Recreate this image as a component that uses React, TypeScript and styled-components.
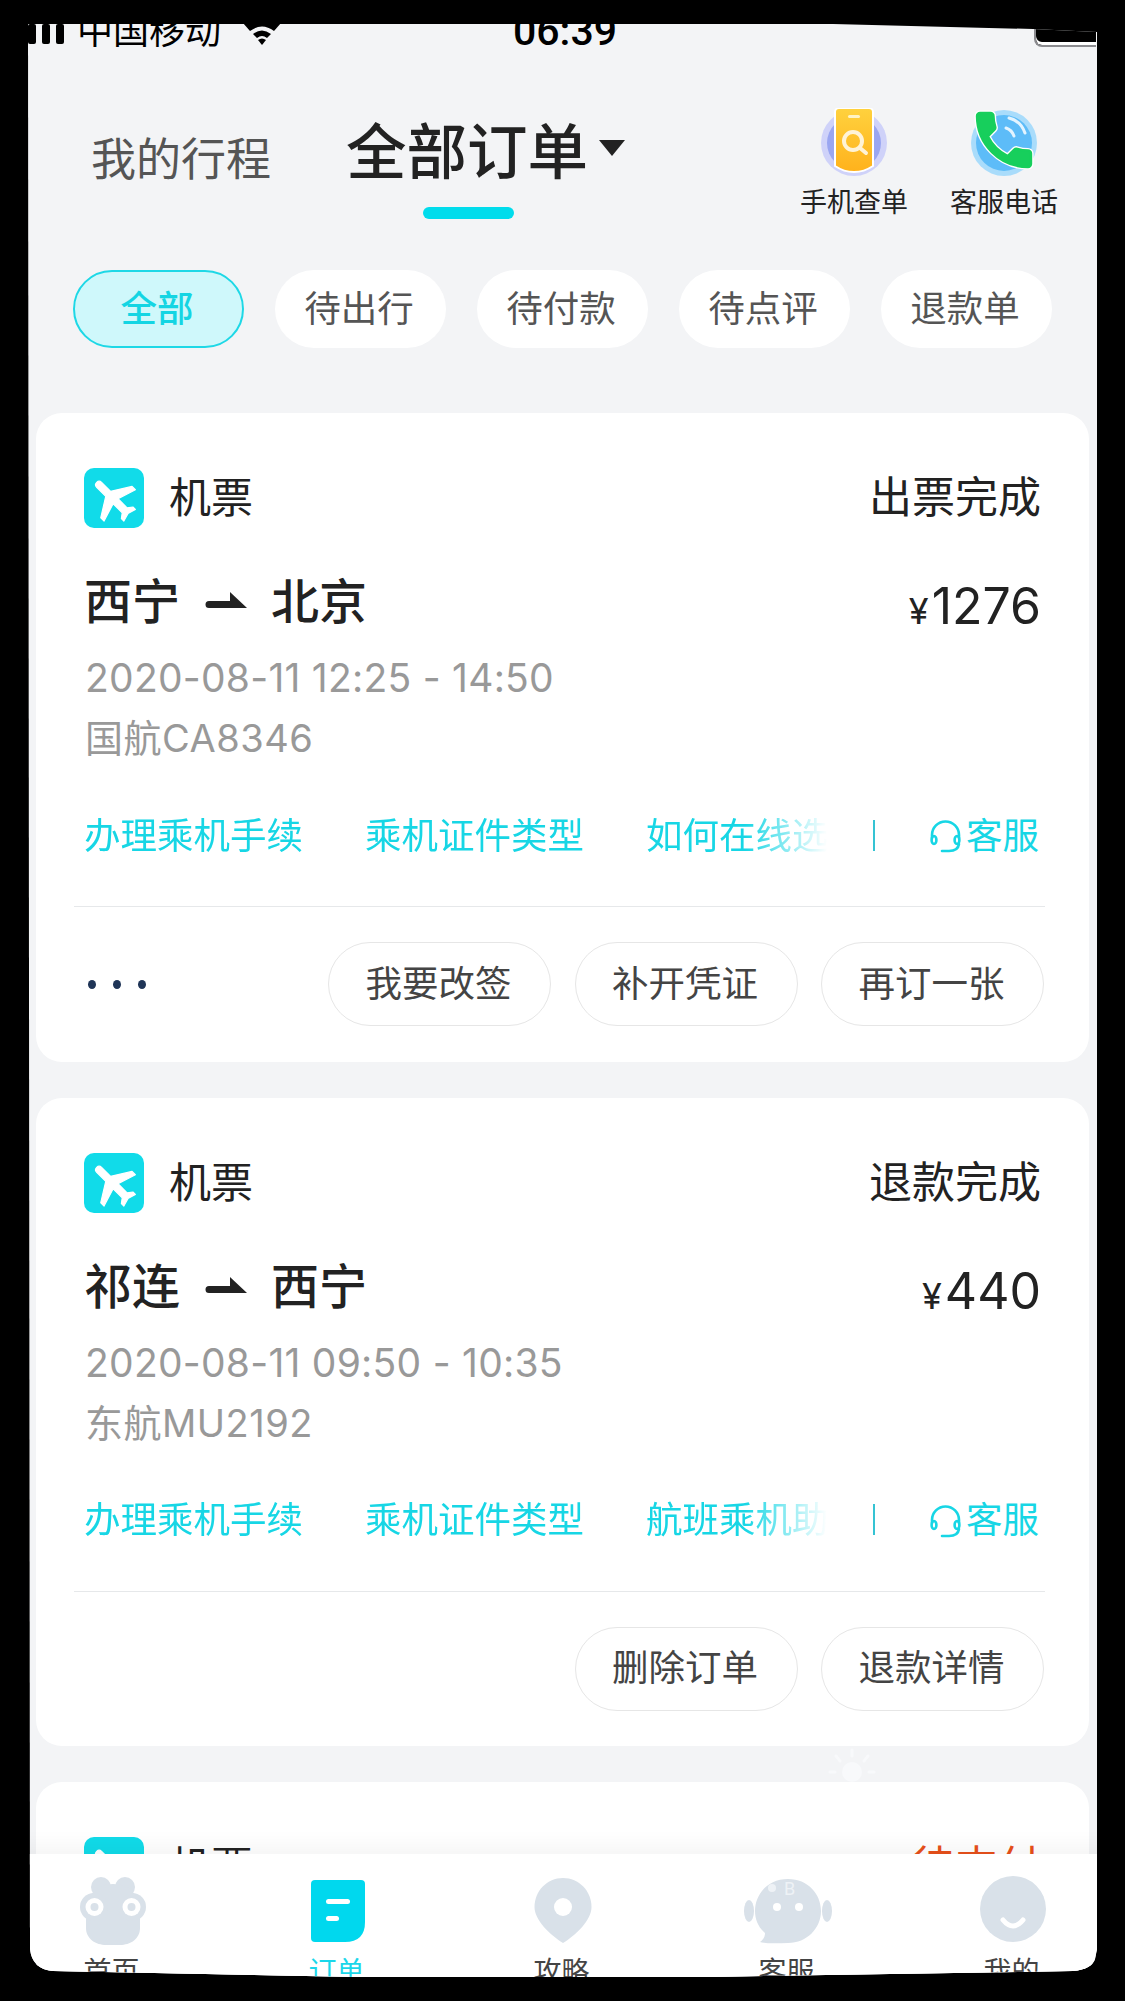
import styled, { createGlobalStyle } from 'styled-components';

const GlobalStyle = createGlobalStyle`
  html, body {
    margin: 0;
    width: 1125px;
    height: 2001px;
    overflow: hidden;
    background: #000;
    font-family: Roboto, "Noto Sans CJK SC", sans-serif;
  }
  * { box-sizing: border-box; }
`;

const CYAN = '#17d6e5';

const Frame = styled.div`
  height: 2001px;
  padding: 24px 0 0 28px;
  background: #000;
`;

const Screen = styled.div`
  position: relative;
  width: 1070px;
  height: 1953px;
  overflow: hidden;
  background: #f3f4f6;
  clip-path: path('M0 0 L805 0 L1005 5 L1069 8 L1069 1925 L1067 1935 Q1064 1945 1045 1947 L680 1953 L330 1953 L25 1947 Q4 1945 2 1925 Z');
`;

const StatusBar = styled.div`
  height: 23px;
  display: grid;
  grid-template-columns: 1fr auto 1fr;
  grid-template-rows: 23px;
  align-items: end;
  color: #000;
`;

const StatusLeft = styled.div`
  display: flex;
  align-items: flex-end;
  gap: 12px;
`;

const Carrier = styled.span`
  font-size: 36px;
  line-height: 36px;
  margin: 0 10px -3px 0;
`;

const Clock = styled.span`
  font-size: 41px;
  font-weight: 500;
  line-height: 36px;
  margin-bottom: -2px;
  padding-left: 4px;
`;

const Battery = styled.div`
  justify-self: end;
  width: 62px;
  height: 23px;
  margin-right: 2px;
  background: #000;
  border: 2px solid #8b8b8f;
  border-top: none;
  border-right: none;
  border-bottom-left-radius: 8px;
  box-shadow: inset 0 -3px 0 #fff;
`;

const Header = styled.div`
  display: flex;
  justify-content: space-between;
  align-items: flex-start;
  margin-top: 61px;
  padding: 0 40px 0 63px;
  height: 111px;
`;

const HeadTabs = styled.div`
  display: flex;
  align-items: flex-start;
`;

const MutedTab = styled.div`
  font-size: 45px;
  line-height: 60px;
  margin-top: 23px;
  color: #555;
`;

const ActiveTab = styled.div`
  display: flex;
  flex-direction: column;
  align-items: center;
  margin: 16px 0 0 75px;
`;

const ActiveTitle = styled.div`
  font-size: 60.5px;
  line-height: 60px;
  font-weight: 500;
  color: #222;
`;

const Underline = styled.div`
  width: 91px;
  height: 12px;
  margin: 23px 0 0 3px;
  border-radius: 6px;
  background: #00dcec;
`;

const Caret = styled.svg`
  width: 28px;
  height: 16px;
  margin: 32px 0 0 10px;
`;

const Quick = styled.div`
  display: flex;
  gap: 42px;
`;

const QuickItem = styled.div`
  width: 108px;
  display: flex;
  flex-direction: column;
  align-items: center;
`;

const QuickLabel = styled.div`
  font-size: 27px;
  line-height: 30px;
  margin-top: 12px;
  color: #222;
  white-space: nowrap;
`;

const Chips = styled.div`
  display: flex;
  gap: 31px;
  margin-top: 51px;
  padding-left: 45px;
`;

const Chip = styled.div<{ $active?: boolean }>`
  width: 171px;
  height: 78px;
  padding: 0 3px 6px 0;
  border-radius: 39px;
  display: flex;
  align-items: center;
  justify-content: center;
  font-size: 36.5px;
  font-weight: ${(p) => (p.$active ? 500 : 400)};
  color: ${(p) => (p.$active ? '#14d5e3' : '#555')};
  background: ${(p) => (p.$active ? '#cff8fb' : '#fff')};
  border: ${(p) => (p.$active ? '2px solid #1ed8e6' : 'none')};
`;

const List = styled.div`
  display: flex;
  flex-direction: column;
  gap: 36px;
  margin: 65px 9px 0 8px;
`;

const Card = styled.div`
  height: 648.5px;
  padding: 55px 48px 0;
  background: #fff;
  border-radius: 26px;
`;

const CardHead = styled.div`
  display: flex;
  align-items: center;
  height: 60px;
`;

const TypeIcon = styled.svg`
  width: 60px;
  height: 60px;
  flex: none;
`;

const TypeName = styled.div`
  font-size: 42px;
  line-height: 60px;
  margin: 2px 0 0 25px;
  color: #222;
`;

const Status = styled.div<{ $alert?: boolean }>`
  margin: 0 0 0 auto;
  font-size: 43px;
  line-height: 60px;
  color: ${(p) => (p.$alert ? '#e8501a' : '#222')};
`;

const RouteRow = styled.div`
  display: flex;
  align-items: center;
  justify-content: space-between;
  height: 60px;
  margin-top: 42px;
`;

const Route = styled.div`
  display: flex;
  align-items: center;
  margin-top: -4px;
  font-size: 48px;
  font-weight: 500;
  color: #222;
`;

const RouteArrow = styled.svg`
  width: 42px;
  height: 16px;
  margin: 4px 24px 0 25px;
`;

const Price = styled.div`
  display: flex;
  align-items: baseline;
  font-family: Inter, sans-serif;
  font-size: 50px;
  color: #222;
  transform: translateY(6px);
`;

const Yen = styled.span`
  font-size: 36px;
  margin-right: 3px;
`;

const MetaBlock = styled.div`
  margin-top: 17px;
  padding-left: 1px;
  color: #999;
  font-family: Inter, "Noto Sans CJK SC", sans-serif;
`;

const MetaTime = styled.div`
  font-size: 39px;
  line-height: 61px;
  letter-spacing: 0.25px;
`;

const MetaFlight = styled.div`
  font-size: 38px;
  line-height: 60px;
  letter-spacing: 0.5px;
`;

const LinkRow = styled.div`
  display: flex;
  align-items: center;
  height: 50px;
  margin-top: 42px;
  color: ${CYAN};
  font-size: 36.5px;
  line-height: 46px;
`;

const LinkScroll = styled.div`
  flex: 0 0 743px;
  display: flex;
  gap: 62px;
  overflow: hidden;
  white-space: nowrap;
  margin-top: 3px;
  mask-image: linear-gradient(to right, #000 89%, transparent 100%);
`;

const LinkSep = styled.div`
  width: 2px;
  height: 31px;
  margin-left: 46px;
  background: #35c3d3;
`;

const Service = styled.div`
  display: flex;
  align-items: center;
  gap: 4px;
  margin: 3px 2px 0 auto;
`;

const Divider = styled.div`
  height: 1px;
  margin: 46px -4px 0 -10px;
  background: #e6e8ea;
`;

const Footer = styled.div`
  display: flex;
  align-items: center;
  gap: 23.5px;
  margin: 35px -3px 0 -10px;
`;

const Dots = styled.div`
  display: flex;
  gap: 17px;
  margin: 0 auto 0 14px;
`;

const Dot = styled.span`
  width: 8px;
  height: 9px;
  border-radius: 50%;
  background: #1f3557;
`;

const ActionButton = styled.div`
  width: 223px;
  height: 84px;
  padding: 0 2px 6px 0;
  border-radius: 42px;
  border: 1px solid #e6e6e6;
  display: flex;
  align-items: center;
  justify-content: center;
  font-size: 36.5px;
  color: #444;
`;

const FooterEnd = styled(Footer)`
  justify-content: flex-end;
`;

const Sun = styled.svg`
  position: absolute;
  left: 800px;
  top: 1724px;
  width: 48px;
  height: 48px;
`;

const TabBar = styled.div`
  position: absolute;
  left: -28px;
  top: 1830px;
  width: 1125px;
  height: 123px;
  display: grid;
  grid-template-columns: repeat(5, 1fr);
  background: #fff;
  box-shadow: 0 -12px 22px -6px rgba(0, 0, 0, 0.05);
`;

const TabItem = styled.div<{ $active?: boolean }>`
  display: flex;
  flex-direction: column;
  align-items: center;
  padding-top: 22px;
  font-size: 28px;
  color: ${(p) => (p.$active ? '#1ad7ea' : '#444')};
`;

const TabIcon = styled.svg`
  width: 90px;
  height: 70px;
  flex: none;
`;

const TabLabel = styled.div`
  margin: 9px 2px 0 0;
  line-height: 36px;
`;

const PlaneIcon = () => (
  <TypeIcon viewBox="0 0 60 60">
    <rect width="60" height="60" rx="10" fill="#11dbe9" />
    <g transform="translate(2 2) scale(2.33) rotate(-45 12 12)">
      <path
        fill="#fff"
        stroke="#fff"
        strokeWidth="0.5"
        strokeLinejoin="round"
        d="M21 16v-2l-8-5V3.5c0-.83-.67-1.5-1.5-1.5S10 2.67 10 3.5V9l-8 5v2l8-2.5V19l-2 1.5V22l3.5-1 3.5 1v-1.5L13 19v-5.5l8 2.5z"
      />
    </g>
  </TypeIcon>
);

const Arrow = () => (
  <RouteArrow viewBox="0 0 42 16">
    <path fill="#222" d="M4 9 H25 V0 L42 16 H4 A3.5 3.5 0 0 1 4 9 Z" />
  </RouteArrow>
);

const Headset = () => (
  <svg width="33" height="33" viewBox="0 0 33 33" fill="none" stroke={CYAN} strokeWidth="2.6" strokeLinecap="round">
    <path d="M3 18 V15 A13.5 13.5 0 0 1 30 15 V18" />
    <ellipse cx="5" cy="20" rx="2.4" ry="4" />
    <ellipse cx="28" cy="20" rx="2.4" ry="4" />
    <path d="M30 24 Q29 31 20 31 H13" />
  </svg>
);

const PhoneSearchIcon = () => (
  <svg width="66" height="68" viewBox="0 0 66 68">
    <defs>
      <linearGradient id="phoneFill" x1="0" y1="0" x2="0" y2="1">
        <stop offset="0" stopColor="#ffd23e" />
        <stop offset="1" stopColor="#ffb21c" />
      </linearGradient>
    </defs>
    <circle cx="33" cy="35" r="33" fill="#cfd2f9" />
    <circle cx="33" cy="35" r="27" fill="#9aa6f1" />
    <path
      d="M18 0 H48 A4 4 0 0 1 52 4 V58 Q43 64 33 64 Q23 64 14 58 V4 A4 4 0 0 1 18 0 Z"
      fill="url(#phoneFill)"
      stroke="#fff"
      strokeWidth="2"
    />
    <rect x="27" y="7" width="12" height="3" rx="1.5" fill="#fff3c4" />
    <circle cx="32" cy="33" r="9" fill="none" stroke="#fff3d6" strokeWidth="4" />
    <path d="M39 40 L45 45" stroke="#fff3d6" strokeWidth="4" strokeLinecap="round" />
  </svg>
);

const HANDSET =
  'M6.62 10.79c1.44 2.83 3.76 5.14 6.59 6.59l2.2-2.2c.27-.27.67-.36 1.02-.24 1.12.37 2.33.57 3.57.57.55 0 1 .45 1 1V20c0 .55-.45 1-1 1-9.39 0-17-7.61-17-17 0-.55.45-1 1-1h3.5c.55 0 1 .45 1 1 0 1.25.2 2.45.57 3.57.11.35.03.74-.25 1.02l-2.2 2.2z';

const CallIcon = () => (
  <svg width="66" height="68" viewBox="0 0 66 68">
    <circle cx="33" cy="35" r="33" fill="#a9dcfb" />
    <circle cx="33" cy="35" r="28" fill="#5dbcf8" />
    <g transform="translate(-3 -4) scale(3)" strokeLinejoin="round">
      <path d={HANDSET} fill="#fff" stroke="#fff" strokeWidth="1.7" />
      <path d={HANDSET} fill="#17cf5c" stroke="#17cf5c" strokeWidth="0.8" />
    </g>
    <g fill="none" stroke="#e3f4ff" strokeWidth="3" strokeLinecap="round">
      <path d="M35 20 Q41 22 43 28" />
      <path d="M38 10 Q50 13 54 25" />
    </g>
  </svg>
);

const WifiIcon = () => (
  <svg width="38" height="24" viewBox="0 0 38 24" style={{ marginBottom: 2 }}>
    <path d="M0 2 L38 2 L31 10 Q19 1 7 10 Z" fill="#000" />
    <path d="M10 13 Q19 6 28 13 L24 17 Q19 13 14 17 Z" fill="#000" />
    <path d="M15 19 Q19 16 23 19 L19 24 Z" fill="#000" />
  </svg>
);

const SignalIcon = () => (
  <svg width="37" height="20" viewBox="0 0 37 20" style={{ marginBottom: 3 }}>
    <rect x="0" y="0" width="8" height="20" rx="2" fill="#000" />
    <rect x="14" y="0" width="8" height="20" rx="2" fill="#000" />
    <rect x="28" y="0" width="8" height="20" rx="2" fill="#000" />
  </svg>
);

const GREY = '#d9e1e9';

const HomeGlyph = () => (
  <TabIcon viewBox="0 0 90 70">
    <circle cx="33" cy="11" r="10" fill={GREY} />
    <circle cx="57" cy="11" r="10" fill={GREY} />
    <path d="M45 8 C62 8 72 20 72 36 V52 C72 63 62 69 52 69 H38 C28 69 18 63 18 52 V36 C18 20 28 8 45 8 Z" fill={GREY} />
    <circle cx="26" cy="31" r="14" fill={GREY} />
    <circle cx="64" cy="31" r="14" fill={GREY} />
    <circle cx="26.500" cy="31" r="9" fill="#fff" />
    <circle cx="26.500" cy="31" r="4" fill={GREY} />
    <circle cx="63.500" cy="31" r="9" fill="#fff" />
    <circle cx="63.500" cy="31" r="4" fill={GREY} />
  </TabIcon>
);

const OrderGlyph = () => (
  <TabIcon viewBox="0 0 90 70">
    <path
      d="M22 4 H68 A4 4 0 0 1 72 8 V46 Q72 66 52 66 H22 A4 4 0 0 1 18 62 V8 A4 4 0 0 1 22 4 Z"
      fill="#00d8ee"
    />
    <rect x="33" y="23" width="24" height="5" rx="2.5" fill="#fff" />
    <rect x="33" y="40" width="13" height="5" rx="2.5" fill="#fff" />
  </TabIcon>
);

const GuideGlyph = () => (
  <TabIcon viewBox="0 0 90 70">
    <path d="M45 2 C61 2 73.500 15 73.500 31 C73.500 44 58 59 45 67 C32 59 16.500 44 16.500 31 C16.500 15 29 2 45 2 Z" fill={GREY} />
    <circle cx="45" cy="31" r="9" fill="#fff" />
  </TabIcon>
);

const ServiceGlyph = () => (
  <TabIcon viewBox="0 0 90 70">
    <ellipse cx="6" cy="35" rx="5" ry="11" fill={GREY} />
    <ellipse cx="84" cy="35" rx="5" ry="11" fill={GREY} />
    <path d="M45 3 C65 3 78 18 78 35 C78 52 64 67 45 67 C36 67 26 68 17 66 C21 63 22 60 22 57 C15 51 12 43 12 35 C12 18 25 3 45 3 Z" fill={GREY} />
    <circle cx="34" cy="31" r="4" fill="#fff" />
    <circle cx="56" cy="31" r="4" fill="#fff" />
    <circle cx="29" cy="12" r="4" fill="#eef2f6" />
    <text x="41" y="19" fontSize="18" fill="#eef2f6" fontFamily="Roboto, sans-serif">B</text>
  </TabIcon>
);

const MineGlyph = () => (
  <TabIcon viewBox="0 0 90 70">
    <circle cx="45" cy="33" r="33" fill={GREY} />
    <path d="M35 44 Q45 56 55 44" fill="none" stroke="#fff" strokeWidth="5" strokeLinecap="round" />
  </TabIcon>
);

const tabs = [
  { label: '首页', Glyph: HomeGlyph },
  { label: '订单', Glyph: OrderGlyph, active: true },
  { label: '攻略', Glyph: GuideGlyph },
  { label: '客服', Glyph: ServiceGlyph },
  { label: '我的', Glyph: MineGlyph },
];

const chips = ['全部', '待出行', '待付款', '待点评', '退款单'];

const orders = [
  {
    status: '出票完成',
    from: '西宁',
    to: '北京',
    price: '1276',
    time: '2020-08-11 12:25 - 14:50',
    flight: '国航CA8346',
    links: ['办理乘机手续', '乘机证件类型', '如何在线选座'],
    actions: ['我要改签', '补开凭证', '再订一张'],
    more: true,
  },
  {
    status: '退款完成',
    from: '祁连',
    to: '西宁',
    price: '440',
    time: '2020-08-11 09:50 - 10:35',
    flight: '东航MU2192',
    links: ['办理乘机手续', '乘机证件类型', '航班乘机助手'],
    actions: ['删除订单', '退款详情'],
    more: false,
  },
];

function App() {
  return (
    <Frame>
      <GlobalStyle />
      <Screen>
        <StatusBar>
          <StatusLeft>
            <SignalIcon />
            <Carrier>中国移动</Carrier>
            <WifiIcon />
          </StatusLeft>
          <Clock>06:39</Clock>
          <Battery />
        </StatusBar>

        <Header>
          <HeadTabs>
            <MutedTab>我的行程</MutedTab>
            <ActiveTab>
              <ActiveTitle>全部订单</ActiveTitle>
              <Underline />
            </ActiveTab>
            <Caret viewBox="0 0 28 16">
              <path d="M1 0 H27 L14 16 Z" fill="#222" />
            </Caret>
          </HeadTabs>
          <Quick>
            <QuickItem>
              <PhoneSearchIcon />
              <QuickLabel>手机查单</QuickLabel>
            </QuickItem>
            <QuickItem>
              <CallIcon />
              <QuickLabel>客服电话</QuickLabel>
            </QuickItem>
          </Quick>
        </Header>

        <Chips>
          {chips.map((c, i) => (
            <Chip key={c} $active={i === 0}>
              {c}
            </Chip>
          ))}
        </Chips>

        <List>
          {orders.map((o) => {
            const Actions = o.more ? Footer : FooterEnd;
            return (
              <Card key={o.flight}>
                <CardHead>
                  <PlaneIcon />
                  <TypeName>机票</TypeName>
                  <Status>{o.status}</Status>
                </CardHead>
                <RouteRow>
                  <Route>
                    {o.from}
                    <Arrow />
                    {o.to}
                  </Route>
                  <Price>
                    <Yen>¥</Yen>
                    {o.price}
                  </Price>
                </RouteRow>
                <MetaBlock>
                  <MetaTime>{o.time}</MetaTime>
                  <MetaFlight>{o.flight}</MetaFlight>
                </MetaBlock>
                <LinkRow>
                  <LinkScroll>
                    {o.links.map((l) => (
                      <span key={l}>{l}</span>
                    ))}
                  </LinkScroll>
                  <LinkSep />
                  <Service>
                    <Headset />
                    客服
                  </Service>
                </LinkRow>
                <Divider />
                <Actions>
                  {o.more && (
                    <Dots>
                      <Dot />
                      <Dot />
                      <Dot />
                    </Dots>
                  )}
                  {o.actions.map((a) => (
                    <ActionButton key={a}>{a}</ActionButton>
                  ))}
                </Actions>
              </Card>
            );
          })}
          <Card>
            <CardHead>
              <PlaneIcon />
              <TypeName>机票</TypeName>
              <Status $alert>待支付</Status>
            </CardHead>
          </Card>
        </List>

        <Sun viewBox="0 0 48 48">
          <g stroke="#f8f9fb" strokeWidth="3" strokeLinecap="round">
            <path d="M24 2 V8 M8 8 L12 13 M40 8 L36 13 M2 24 H7 M41 24 H46" />
          </g>
          <circle cx="24" cy="24" r="10" fill="#f8f9fb" />
        </Sun>

        <TabBar>
          {tabs.map(({ label, Glyph, active }) => (
            <TabItem key={label} $active={active}>
              <Glyph />
              <TabLabel>{label}</TabLabel>
            </TabItem>
          ))}
        </TabBar>
      </Screen>
    </Frame>
  );
}

export default App;
